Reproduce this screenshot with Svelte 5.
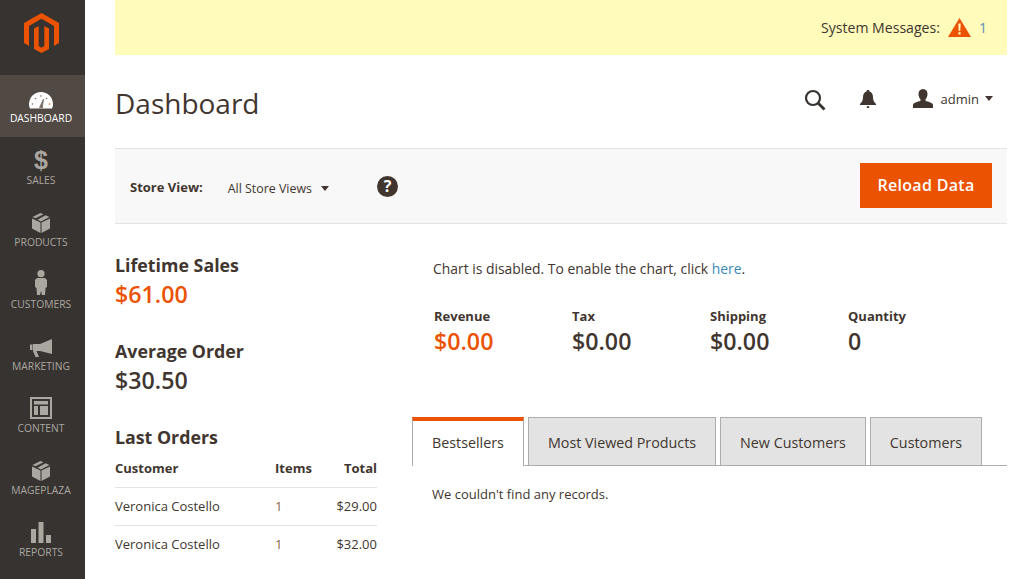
<script lang="ts">
  const nav = [
    { label: "DASHBOARD", icon: "dashboard", active: true },
    { label: "SALES", icon: "sales" },
    { label: "PRODUCTS", icon: "box" },
    { label: "CUSTOMERS", icon: "customer" },
    { label: "MARKETING", icon: "marketing" },
    { label: "CONTENT", icon: "content" },
    { label: "MAGEPLAZA", icon: "box" },
    { label: "REPORTS", icon: "reports" },
  ];
  const totals = [
    { label: "Revenue", value: "$0.00", accent: true },
    { label: "Tax", value: "$0.00" },
    { label: "Shipping", value: "$0.00" },
    { label: "Quantity", value: "0" },
  ];
  const orders = [
    { customer: "Veronica Costello", items: 1, total: "$29.00" },
    { customer: "Veronica Costello", items: 1, total: "$32.00" },
  ];
  const tabs = ["Bestsellers", "Most Viewed Products", "New Customers", "Customers"];
</script>

{#snippet navIcon(name: string)}
  {#if name === "dashboard"}
    <svg width="24" height="17" viewBox="0 0 24 17">
      <path d="M1 16.500c-.6-1.300-1-2.700-1-4.300C0 5.400 5.400 0 12 0s12 5.400 12 12.200c0 1.600-.4 3-1 4.300z" fill="#fff" />
      <path d="M10.500 15.500l4-8.500-1.200 9z" fill="#7a6f66" stroke="#7a6f66" stroke-width=".8" />
      <circle cx="3.500" cy="12" r=".8" fill="#7a6f66" /><circle cx="6.500" cy="6.500" r=".8" fill="#7a6f66" />
      <circle cx="12" cy="4" r=".8" fill="#7a6f66" /><circle cx="17.500" cy="6.500" r=".8" fill="#7a6f66" />
      <circle cx="20.500" cy="12" r=".8" fill="#eb5202" />
    </svg>
  {:else if name === "sales"}
    <span class="dollar">$</span>
  {:else if name === "box"}
    <svg width="18" height="20" viewBox="0 0 18 20">
      <path d="M0 5.500l8.500 4V20L0 15.500z" fill="#aaa6a0" />
      <path d="M18 5.500l-8.500 4V20l8.500-4.500z" fill="#aaa6a0" />
      <path d="M8.500 0l3 1.300-8 4L.5 4z" fill="#aaa6a0" />
      <path d="M13.500 2.200L17.500 4 9 8.500 5.500 6.800z" fill="#aaa6a0" />
    </svg>
  {:else if name === "customer"}
    <svg width="12" height="25" viewBox="0 0 12 25">
      <circle cx="6" cy="3.700" r="3.600" fill="#aaa6a0" />
      <path d="M2 8h8l2 2v7l-1.500 1-.5 7H7l-1-4-1 4H2l-.5-7L0 17v-7z" fill="#aaa6a0" />
    </svg>
  {:else if name === "marketing"}
    <svg width="22" height="18" viewBox="0 0 22 18">
      <path d="M22 0v15L10 12H6.500L9 18H5.500L3 12V5h7z" fill="#aaa6a0" />
      <rect x="0" y="5.500" width="2.500" height="5.500" fill="#aaa6a0" />
    </svg>
  {:else if name === "content"}
    <svg width="22" height="22" viewBox="0 0 22 22">
      <path fill-rule="evenodd" d="M0 0h22v22H0zM2 2v18h18V2z" fill="#aaa6a0" />
      <path d="M4 4h14v3.500H4zM4 9h4v9H4zM10 9h8v9h-8z" fill="#aaa6a0" />
    </svg>
  {:else if name === "reports"}
    <svg width="20" height="21" viewBox="0 0 20 21">
      <rect x="0" y="7" width="5" height="14" fill="#aaa6a0" />
      <rect x="7.500" y="0" width="5" height="21" fill="#aaa6a0" />
      <rect x="15" y="13" width="5" height="8" fill="#aaa6a0" />
    </svg>
  {/if}
{/snippet}

<div class="shell">
  <nav class="sidebar">
    <div class="logo">
      <svg width="35" height="40" viewBox="0 0 35 40">
        <path d="M17.500 0L35 10v20l-5 3V13L17.500 5.700 5 13v20l-5-3V10z" fill="#eb5202" />
        <path d="M10 15.500L14.700 13v20l2.800 1.700 2.800-1.700V13L25 15.500V36l-7.500 4L10 36z" fill="#eb5202" />
      </svg>
    </div>
    {#each nav as item}
      <div class="nav-item" class:active={item.active}>
        <div class="nav-icon">{@render navIcon(item.icon)}</div>
        <span>{item.label}</span>
      </div>
    {/each}
  </nav>

  <main class="main">
    <div class="notice">
      <span>System Messages:</span>
      <svg width="23" height="19" viewBox="0 0 23 19">
        <path d="M11.500 0L23 19H0z" fill="#eb5202" />
        <path d="M10.300 5.500h2.400l-.4 7.500h-1.600zM10.400 14.200h2.200v2.300h-2.200z" fill="#fffbbb" />
      </svg>
      <span class="notice-count">1</span>
    </div>

    <header class="page-head">
      <h1>Dashboard</h1>
      <div class="actions">
        <svg class="search" width="22" height="22" viewBox="0 0 22 22" fill="none" stroke="#373330">
          <circle cx="9" cy="9" r="7" stroke-width="2.200" />
          <path d="M14 14l6.500 6.500" stroke-width="2.800" />
        </svg>
        <svg class="bell" width="16" height="18" viewBox="0 0 16 18">
          <path d="M8 0c1 0 1.500.6 1.500 1.400C12 2.200 13 4.500 13 7c0 3.500 1 5 3 7v1H0v-1c2-2 3-3.500 3-7 0-2.500 1-4.800 3.500-5.600C6.500.6 7 0 8 0z" fill="#41362f" />
          <rect x="6.800" y="16.200" width="2.400" height="1.800" fill="#41362f" />
        </svg>
        <div class="user">
          <svg width="20" height="19" viewBox="0 0 20 19">
            <path d="M10 0c3 0 4.500 2.200 4.500 5 0 2.200-.8 4-2 5.200v1.600c3 1 7.500 2 7.500 4.200v3H0v-3c0-2.200 4.500-3.200 7.500-4.200v-1.600c-1.200-1.200-2-3-2-5.200 0-2.800 1.500-5 4.500-5z" fill="#41362f" />
          </svg>
          <span>admin</span>
          <i class="caret"></i>
        </div>
      </div>
    </header>

    <section class="store-bar">
      <strong>Store View:</strong>
      <div class="store-select">All Store Views <i class="caret"></i></div>
      <span class="help">?</span>
      <button class="reload">Reload Data</button>
    </section>

    <div class="columns">
      <aside class="left">
        <div class="stat">
          <h2>Lifetime Sales</h2>
          <div class="big accent">$61.00</div>
        </div>
        <div class="stat">
          <h2>Average Order</h2>
          <div class="big">$30.50</div>
        </div>
        <h2 class="orders-title">Last Orders</h2>
        <table>
          <thead>
            <tr><th class="customer">Customer</th><th class="items">Items</th><th class="total">Total</th></tr>
          </thead>
          <tbody>
            {#each orders as o}
              <tr>
                <td>{o.customer}</td>
                <td class="items qty">{o.items}</td>
                <td class="total">{o.total}</td>
              </tr>
            {/each}
          </tbody>
        </table>
      </aside>

      <div class="right">
        <p class="chart-note">Chart is disabled. To enable the chart, click <a href="#here">here</a>.</p>
        <ul class="totals">
          {#each totals as t}
            <li>
              <span class="total-label">{t.label}</span>
              <span class="big" class:accent={t.accent}>{t.value}</span>
            </li>
          {/each}
        </ul>
        <div class="tabs">
          {#each tabs as tab, i}
            <div class="tab" class:current={i === 0}>{tab}</div>
          {/each}
        </div>
        <p class="empty">We couldn't find any records.</p>
      </div>
    </div>
  </main>
</div>

<style>
  :global(body) {
    margin: 0;
    background: #fff;
    overflow: hidden;
  }

  .shell {
    display: flex;
    width: 1026px;
    height: 579px;
    overflow: hidden;
    font-family: "Open Sans", sans-serif;
    font-size: 14px;
    color: #41362f;
  }

  .sidebar {
    flex: 0 0 85px;
    background: #373330;
    color: #aaa6a0;
  }

  .logo {
    height: 75px;
    display: flex;
    justify-content: center;
    padding: 13px 2px 0 0;
    box-sizing: border-box;
  }

  .nav-item {
    height: 62px;
    display: flex;
    flex-direction: column;
    align-items: center;
    padding-right: 3px;
    font-size: 10.300px;
    line-height: 14px;
  }

  .nav-item.active {
    background: #514943;
    color: #fff;
  }

  .nav-icon {
    height: 35px;
    margin-bottom: 1px;
    flex: none;
    display: flex;
    align-items: flex-end;
    justify-content: center;
    padding-bottom: 1px;
    box-sizing: border-box;
  }

  .dollar {
    font-family: "Liberation Sans", sans-serif;
    font-weight: 700;
    font-size: 25px;
    line-height: 22px;
    color: #aaa6a0;
  }

  .main {
    flex: 1;
    min-width: 0;
    padding: 0 19px 0 30px;
  }

  .notice {
    height: 55px;
    background: #fffbbb;
    display: flex;
    align-items: center;
    justify-content: flex-end;
    padding-right: 20px;
    font-size: 14.100px;
  }

  .notice svg {
    margin: 0 8px;
  }

  .notice-count {
    color: #5a8fb8;
  }

  .page-head {
    height: 93px;
    display: flex;
    align-items: center;
    justify-content: space-between;
  }

  h1 {
    margin: 2px 0 0;
    font-size: 28px;
    font-weight: 400;
    color: #41362f;
  }

  .actions {
    display: flex;
    align-items: center;
    padding-right: 14px;
    margin-top: -6px;
  }

  .search {
    margin: 2px 34px 0 0;
  }

  .bell {
    margin-right: 37px;
  }

  .user {
    display: flex;
    align-items: center;
    font-size: 13px;
  }

  .user span {
    margin: 0 6px 0 8px;
  }

  .caret {
    display: inline-block;
    width: 0;
    height: 0;
    border-left: 4.500px solid transparent;
    border-right: 4.500px solid transparent;
    border-top: 5px solid #41362f;
  }

  .store-bar {
    height: 76px;
    box-sizing: border-box;
    background: #f8f8f8;
    border-top: 1px solid #e3e3e3;
    border-bottom: 1px solid #e3e3e3;
    display: flex;
    align-items: center;
    padding: 0 15px;
  }

  .store-bar strong {
    font-size: 13px;
    font-weight: 700;
    margin: 2px 25px 0 0;
  }

  .store-select {
    font-size: 12.400px;
    display: flex;
    align-items: center;
    gap: 9px;
    margin-top: 5px;
  }

  .help {
    width: 21px;
    height: 21px;
    border-radius: 50%;
    background: #41362f;
    color: #fff;
    font-weight: 700;
    font-size: 16px;
    line-height: 21px;
    text-align: center;
    margin-left: 48px;
  }

  .reload {
    margin-left: auto;
    width: 132px;
    height: 45px;
    margin-top: -1px;
    padding: 0 0 2px;
    border: none;
    background: #eb5202;
    color: #fff;
    font-family: inherit;
    font-size: 16px;
    font-weight: 600;
    letter-spacing: .3px;
  }

  .columns {
    display: flex;
    gap: 35px;
  }

  .left {
    flex: 0 0 262px;
    padding-top: 28px;
  }

  .stat {
    margin-bottom: 28px;
  }

  h2 {
    margin: 0;
    font-size: 17.800px;
    font-weight: 700;
    line-height: 26px;
  }

  .big {
    font-size: 23.200px;
    font-weight: 600;
    line-height: 32px;
    color: #41362f;
  }

  .big.accent {
    color: #eb5202;
  }

  .orders-title {
    margin-top: 28px;
  }

  table {
    width: 100%;
    border-collapse: collapse;
    font-size: 13px;
    margin-top: 9px;
  }

  th {
    font-size: 13px;
    font-weight: 700;
    text-align: left;
    padding: 0 0 10px;
    border-bottom: 1px solid #e3e3e3;
  }

  td {
    padding: 0 0 2px;
    height: 35px;
    border-bottom: 1px solid #e3e3e3;
  }

  tr:last-child td {
    border-bottom: none;
  }

  .customer {
    width: 160px;
  }

  .qty {
    color: #8a6a45;
  }

  th.total, td.total {
    text-align: right;
  }

  .right {
    flex: 1;
    min-width: 0;
  }

  .chart-note {
    margin: 35px 0 0 21px;
    font-size: 13.900px;
    line-height: 20px;
  }

  .chart-note a {
    color: #3d8ab5;
    text-decoration: none;
  }

  .totals {
    list-style: none;
    margin: 28px 0 0 22px;
    padding: 0;
    display: flex;
  }

  .totals li {
    flex: 0 0 138px;
    display: flex;
    flex-direction: column;
  }

  .total-label {
    font-size: 13px;
    font-weight: 700;
    line-height: 18px;
  }

  .tabs {
    display: flex;
    gap: 4px;
    margin-top: 60px;
    height: 49px;
    box-sizing: border-box;
    border-bottom: 1px solid #adadad;
  }

  .tab {
    height: 49px;
    box-sizing: border-box;
    padding: 0 19px;
    border: 1px solid #adadad;
    background: #e3e3e3;
    font-size: 14.300px;
    line-height: 49px;
  }

  .tab.current {
    background: #fff;
    border-top: 4px solid #eb5202;
    border-bottom: none;
    line-height: 43px;
  }

  .empty {
    margin: 19px 0 0 20px;
    font-size: 13px;
  }
</style>
